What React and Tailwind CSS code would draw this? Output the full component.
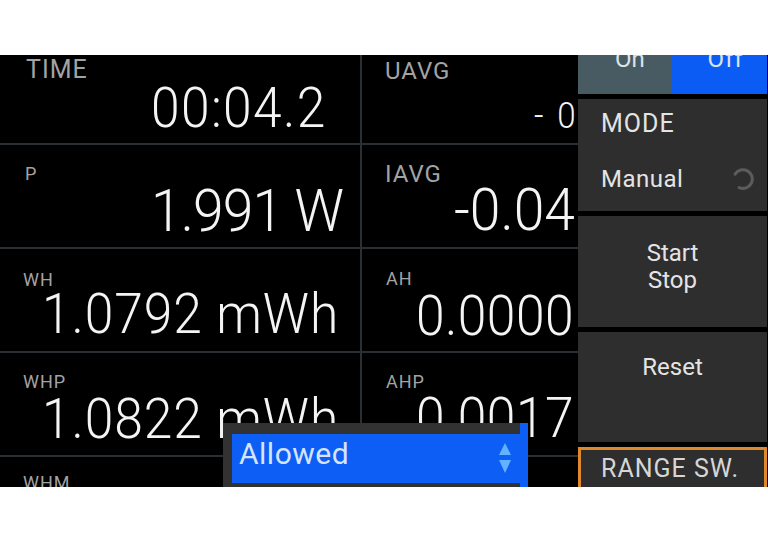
import React from 'react';

// Zellen der Messwert-Tabelle (links: Spalte 1, rechts: Spalte 2)
const ROWS = [
  [
    { label: 'TIME', labelCls: 'text-[25px] pt-[16px] pl-[26px]', value: '00:04.2', valueCls: 'text-[56px] mt-[-2px] pl-[151px] tracking-[1.5px]' },
    { label: 'UAVG', labelCls: 'text-[24px] pt-[18px] pl-[23px]', value: '-0.0012 V', valueCls: 'text-[36px] mt-[15px] pl-[172px] tracking-[15px]' },
  ],
  [
    { label: 'P', labelCls: 'text-[18px] pt-[20px] pl-[25px]', value: '1.991 W', valueCls: 'text-[60px] mt-[-2px] pl-[151px] tracking-[-1px]' },
    { label: 'IAVG', labelCls: 'text-[24px] pt-[17px] pl-[23px]', value: '-0.0451 A', valueCls: 'text-[60px] mt-[-6px] pl-[92px]' },
  ],
  [
    { label: 'WH', labelCls: 'text-[18px] pt-[22px] pl-[23px]', value: '1.0792 mWh', valueCls: 'text-[56px] mt-[-3px] pl-[42px] tracking-[1px]' },
    { label: 'AH', labelCls: 'text-[18px] pt-[21px] pl-[24px]', value: '0.0000 mAh', valueCls: 'text-[56px] mt-[0px] pl-[54px] tracking-[0.5px]' },
  ],
  [
    { label: 'WHP', labelCls: 'text-[18px] pt-[20px] pl-[23px]', value: '1.0822 mWh', valueCls: 'text-[56px] mt-[0px] pl-[42px] tracking-[1px]' },
    { label: 'AHP', labelCls: 'text-[18px] pt-[20px] pl-[24px]', value: '0.0017 mAh', valueCls: 'text-[56px] mt-[-1px] pl-[54px] tracking-[0.5px]' },
  ],
  [
    { label: 'WHM', labelCls: 'text-[18px] pt-[17px] pl-[23px]', value: '0.0030 mWh', valueCls: 'text-[56px] mt-[0px] pl-[42px]' },
    { label: 'AHM', labelCls: 'text-[18px] pt-[17px] pl-[24px]', value: '0.0017 mAh', valueCls: 'text-[56px] mt-[0px] pl-[54px]' },
  ],
];

const FONT = "font-['Roboto','Liberation_Sans',sans-serif]";

function Cell({ cell }) {
  return (
    <div className="bg-black h-[102px] overflow-hidden flex flex-col">
      <div className={`leading-none text-[#a3a3a3] tracking-[1px] ${cell.labelCls}`}>{cell.label}</div>
      <div className={`leading-none text-[#f4f4f4] font-light whitespace-nowrap ${cell.valueCls}`}>
        <div className="origin-left scale-x-[0.92]">{cell.value}</div>
      </div>
    </div>
  );
}

function Spinner() {
  return (
    <svg width="28" height="28" viewBox="0 0 24 24" fill="none">
      <path d="M5.2 7.8 A8 8 0 1 1 8.7 19.3" stroke="#5c5c5c" strokeWidth="2.6" strokeLinecap="round" />
    </svg>
  );
}

function UpDown() {
  return (
    <svg width="14" height="30" viewBox="0 0 14 30">
      <polygon points="7,0 13,12 1,12" fill="#63b2ff" />
      <polygon points="1,17 13,17 7,30" fill="#63b2ff" />
    </svg>
  );
}

export default function App() {
  return (
    <div className={`w-[768px] h-[543px] bg-white pt-[55px] ${FONT}`}>
      <div className="relative h-[432px] bg-black overflow-hidden">
        <div className="flex mt-[-14px]">
          {/* Messwerte */}
          <div className="grid grid-cols-[360px_216px] gap-[2px] bg-[#2a2f33] w-[578px]">
            {ROWS.map((row, i) => (
              <React.Fragment key={i}>
                <Cell cell={row[0]} />
                <Cell cell={row[1]} />
              </React.Fragment>
            ))}
          </div>

          {/* Softkeys rechts */}
          <div className="w-[189px] flex flex-col gap-[5px] text-[#e4e4e4]">
            <div className="h-[53px] flex text-[24px] leading-none text-[#dbe3e8]">
              <div className="w-[94px] bg-[#485a62] flex justify-center pt-[6px] pl-[10px]">On</div>
              <div className="flex-1 bg-[#0b5cf5] flex justify-center pt-[6px] pl-[12px] tracking-[1px]">Off</div>
            </div>
            <div className="h-[112px] bg-[#2e2e2e] pl-[23px] pr-[10px] pt-[12px] flex flex-col">
              <div className="text-[25px] leading-none tracking-[1px]">MODE</div>
              <div className="mt-[29px] flex items-center justify-between">
                <span className="text-[24px] leading-none tracking-[0.5px]">Manual</span>
                <Spinner />
              </div>
            </div>
            <div className="h-[111px] bg-[#2e2e2e] pt-[24px] text-center text-[24px] leading-[27px]">
              <div>Start</div>
              <div>Stop</div>
            </div>
            <div className="h-[110px] bg-[#2e2e2e] pt-[23px] text-center text-[24px] leading-none">
              Reset
            </div>
            <div className="h-[60px] bg-[#2e2e2e] border-[3px] border-[#e0892c] pl-[20px] pt-[6px] text-[25px] leading-none tracking-[1px] text-[#d6d6d6]">
              RANGE SW.
            </div>
          </div>
        </div>

        {/* Auswahlliste */}
        <div className="absolute left-[223px] top-[368px] w-[305px] h-[80px] bg-[#323232] border-r-[8px] border-[#0d5ef5] pl-[9px] pt-[11px]">
          <div className="h-[49px] bg-[#0d5ef5] flex items-start justify-between pl-[7px] pr-[8px] pt-[5px]">
            <span className="text-[30px] leading-none tracking-[0.5px] text-[#d6e4ff]">Allowed</span>
            <div className="mt-[4px]">
              <UpDown />
            </div>
          </div>
        </div>
      </div>
    </div>
  );
}
